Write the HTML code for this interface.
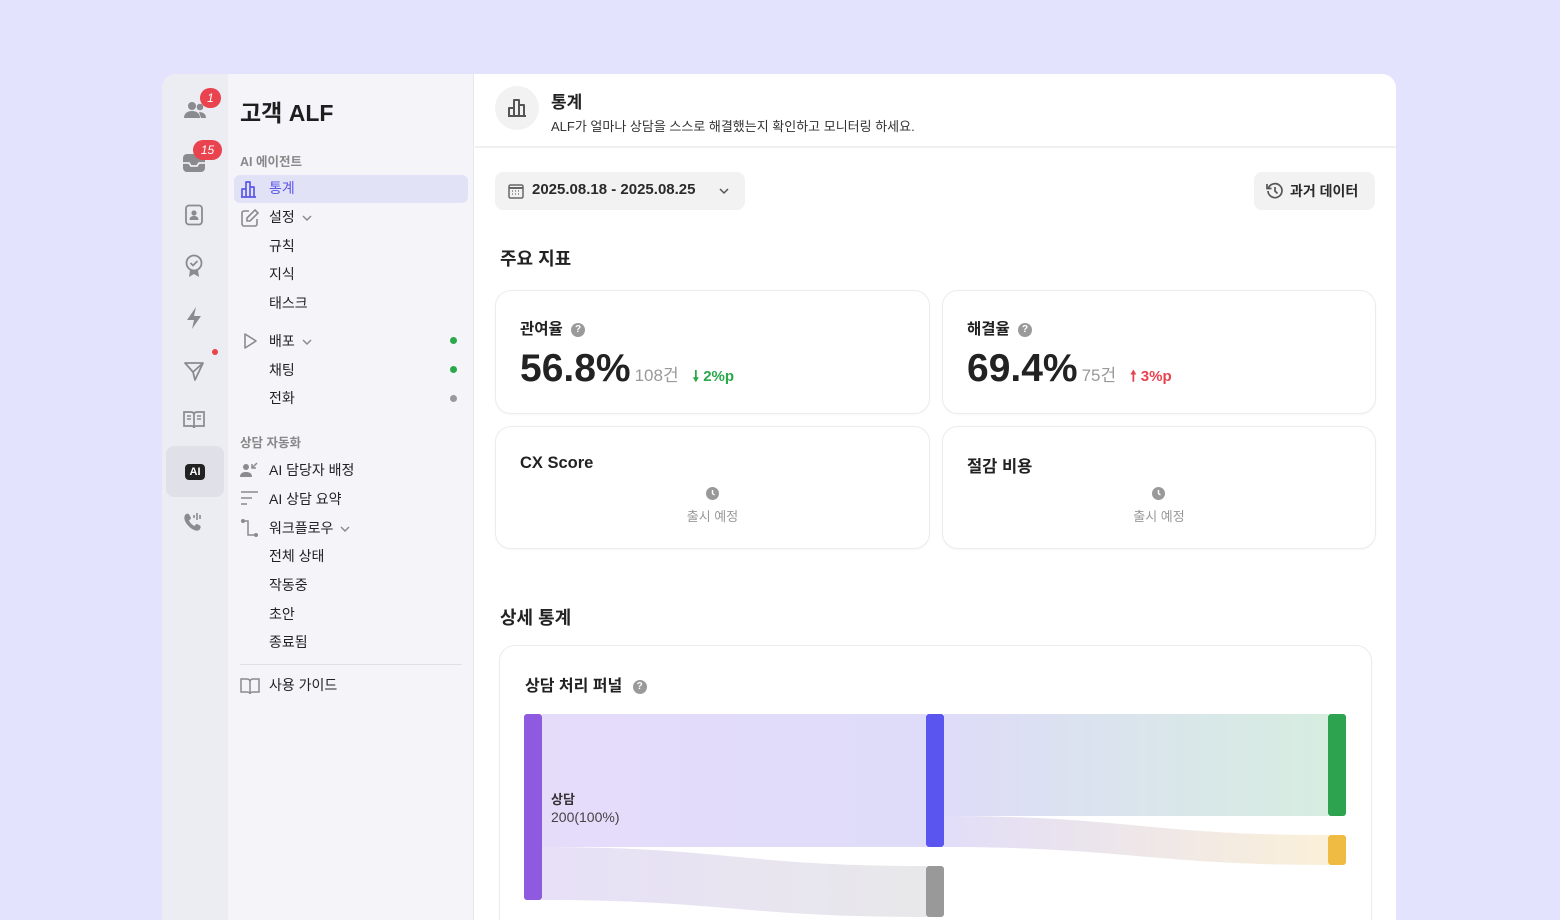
<!DOCTYPE html>
<html><head><meta charset="utf-8"><style>
*{margin:0;padding:0;box-sizing:border-box}
body{width:1560px;height:920px;overflow:hidden;background:#e4e3fd;font-family:"Liberation Sans","Noto Sans CJK KR",sans-serif;color:#222;position:relative}
.a{position:absolute}
.card{position:absolute;left:162px;top:74px;width:1234px;height:846px;border-radius:14px 14px 0 0;background:#fff;overflow:hidden}
.rail{position:absolute;left:0;top:0;width:66px;height:100%;background:#ececf3}
.side{position:absolute;left:66px;top:0;width:246px;height:100%;background:#f4f4f9;border-right:1px solid #e6e6ee}
.t{position:absolute;white-space:nowrap}
.si{position:absolute;left:41px;font-size:14px;color:#222;white-space:nowrap}
.sh{position:absolute;left:12px;font-size:12.5px;color:#888;font-weight:bold}
.dot{position:absolute;left:222px;width:7px;height:7px;border-radius:50%}
.ic{position:absolute;left:12px}
.ri{position:absolute;left:21px}
.kpi{position:absolute;border:1px solid #ececec;border-radius:16px;background:#fff;box-shadow:0 1px 2px rgba(0,0,0,.04)}
.q{display:inline-block;width:14px;height:14px;border-radius:50%;background:#9a9a9a;color:#fff;font-size:10px;font-weight:bold;text-align:center;line-height:14px;vertical-align:middle}
.badge{position:absolute;background:#e8434f;color:#fff;font-size:12px;border-radius:10px;height:20px;line-height:20px;text-align:center;font-style:italic}
.chev{display:inline-block;vertical-align:middle;margin-left:6px}
</style></head><body>
<div class="card">
 <div class="rail">
  <svg class="ri" style="top:26px" width="24" height="20" viewBox="0 0 24 20"><circle cx="9" cy="6" r="4" fill="#8a8a8f"/><circle cx="17" cy="7" r="3.3" fill="#8a8a8f"/><path d="M1 18c0-5 4-7 8-7s8 2 8 7z" fill="#8a8a8f"/><path d="M16 12c4 0 7 2 7 6h-5" fill="#8a8a8f"/></svg>
  <div class="badge" style="left:38px;top:14px;width:21px">1</div>
  <svg class="ri" style="top:80px" width="22" height="18" viewBox="0 0 22 18"><rect x="0" y="0" width="22" height="18" rx="4" fill="#8a8a8f"/><path d="M0 9h6l2 3h6l2-3h6" stroke="#ececf3" stroke-width="1.8" fill="none"/></svg>
  <div class="badge" style="left:31px;top:66px;width:29px">15</div>
  <svg class="ri" style="top:130px" width="22" height="22" viewBox="0 0 22 22"><rect x="3" y="1.5" width="16" height="19" rx="3" stroke="#8a8a8f" stroke-width="1.8" fill="none"/><circle cx="11" cy="9" r="2.6" fill="#8a8a8f"/><path d="M6.5 16c0-3 2-4 4.5-4s4.5 1 4.5 4z" fill="#8a8a8f"/></svg>
  <svg class="ri" style="top:180px" width="22" height="24" viewBox="0 0 22 24"><circle cx="11" cy="9" r="7.5" stroke="#8a8a8f" stroke-width="1.8" fill="none"/><path d="M7.5 9l2.5 2.5 4.5-4.5" stroke="#8a8a8f" stroke-width="1.8" fill="none"/><path d="M7 16l-1 7 5-3 5 3-1-7" fill="#8a8a8f"/></svg>
  <svg class="ri" style="top:232px" width="22" height="24" viewBox="0 0 22 24"><path d="M13 1L4 14h7l-2 9 9-13h-7z" fill="#8a8a8f"/></svg>
  <div class="a" style="left:50px;top:275px;width:6px;height:6px;border-radius:50%;background:#e8434f"></div>
  <svg class="ri" style="top:286px" width="22" height="22" viewBox="0 0 22 22"><path d="M2 3l18 0-8 17-2-8z M10 12l10-9" stroke="#8a8a8f" stroke-width="1.8" fill="none" stroke-linejoin="round"/></svg>
  <svg class="ri" style="top:336px" width="22" height="20" viewBox="0 0 22 20"><path d="M1 2h7c2 0 3 1 3 3v13c0-1.5-1-2-3-2H1z M21 2h-7c-2 0-3 1-3 3v13c0-1.5 1-2 3-2h7z" stroke="#8a8a8f" stroke-width="1.7" fill="none"/><path d="M4 6h4M4 9h4M14 6h4M14 9h4" stroke="#8a8a8f" stroke-width="1.4"/></svg>
  <div class="a" style="left:4px;top:372px;width:58px;height:51px;border-radius:8px;background:#e0e0e8"></div>
  <div class="a" style="left:23px;top:390px;width:20px;height:16px;border-radius:4px;background:#222;color:#fff;font-size:11px;font-weight:bold;text-align:center;line-height:16px">AI</div>
  <svg class="ri" style="top:437px" width="22" height="22" viewBox="0 0 22 22"><path d="M3 3c2-1 3 0 4 2l1 2c0 1-1 2-2 2 1 3 3 5 6 6 0-1 1-2 2-2l2 1c2 1 2 2 1 4-1 2-3 2-6 1-4-2-7-5-9-9C1 7 1 5 3 3z" fill="#8a8a8f"/><path d="M14 2v7M17 4v4M11 4v3" stroke="#8a8a8f" stroke-width="1.6"/></svg>
 </div>
 <div class="side">
  <div class="t" style="left:12px;top:20px;font-size:23px;font-weight:bold;color:#1e1e1e">고객 ALF</div>
  <div class="sh" style="top:77px">AI 에이전트</div>
  <div class="a" style="left:6px;top:101px;width:234px;height:28px;border-radius:6px;background:#e2e2f6"></div>
  <svg class="ic" style="top:105px" width="20" height="20" viewBox="0 0 20 20"><path d="M2 18V10h4v8M6 18V3h4v15M10 18V8h4v10M1 18h15" stroke="#5b57e8" stroke-width="1.7" fill="none" stroke-linejoin="round"/></svg>
  <div class="si" style="top:104px;color:#5b57e8">통계</div>
  <svg class="ic" style="top:134px" width="20" height="20" viewBox="0 0 20 20"><path d="M9 3H4a2 2 0 0 0-2 2v11a2 2 0 0 0 2 2h11a2 2 0 0 0 2-2v-5" stroke="#8a8a8f" stroke-width="1.6" fill="none"/><path d="M15 2l3 3-8 8H7v-3z" stroke="#8a8a8f" stroke-width="1.6" fill="none"/></svg>
  <div class="si" style="top:133px">설정<svg class="chev" width="12" height="8" viewBox="0 0 12 8"><path d="M2 2l4 4 4-4" stroke="#888" stroke-width="1.4" fill="none"/></svg></div>
  <div class="si" style="top:162px">규칙</div>
  <div class="si" style="top:190px">지식</div>
  <div class="si" style="top:219px">태스크</div>
  <svg class="ic" style="top:257px" width="20" height="20" viewBox="0 0 20 20"><path d="M5 3l11 7-11 7z" stroke="#8a8a8f" stroke-width="1.6" fill="none" stroke-linejoin="round"/></svg>
  <div class="si" style="top:257px">배포<svg class="chev" width="12" height="8" viewBox="0 0 12 8"><path d="M2 2l4 4 4-4" stroke="#888" stroke-width="1.4" fill="none"/></svg></div>
  <div class="dot" style="top:263px;background:#2ba84a"></div>
  <div class="si" style="top:286px">채팅</div>
  <div class="dot" style="top:292px;background:#2ba84a"></div>
  <div class="si" style="top:314px">전화</div>
  <div class="dot" style="top:321px;background:#999"></div>
  <div class="sh" style="top:358px">상담 자동화</div>
  <svg class="ic" style="top:387px" width="20" height="18" viewBox="0 0 20 18"><circle cx="6" cy="6" r="3" fill="#8a8a8f"/><path d="M0 16c0-4 3-5 6-5s6 1 6 5z" fill="#8a8a8f"/><path d="M17 2l-5 5M12 3v4h4" stroke="#8a8a8f" stroke-width="1.5" fill="none"/></svg>
  <div class="si" style="top:386px">AI 담당자 배정</div>
  <svg class="ic" style="top:416px" width="20" height="18" viewBox="0 0 20 18"><path d="M1 2h17M1 8h11M1 14h6" stroke="#8a8a8f" stroke-width="1.5"/></svg>
  <div class="si" style="top:415px">AI 상담 요약</div>
  <svg class="ic" style="top:444px" width="20" height="20" viewBox="0 0 20 20"><circle cx="3" cy="3" r="2" fill="#8a8a8f"/><circle cx="16" cy="17" r="2" fill="#8a8a8f"/><path d="M3 3h5v14h8" stroke="#8a8a8f" stroke-width="1.5" fill="none"/></svg>
  <div class="si" style="top:444px">워크플로우<svg class="chev" width="12" height="8" viewBox="0 0 12 8"><path d="M2 2l4 4 4-4" stroke="#888" stroke-width="1.4" fill="none"/></svg></div>
  <div class="si" style="top:472px">전체 상태</div>
  <div class="si" style="top:501px">작동중</div>
  <div class="si" style="top:530px">초안</div>
  <div class="si" style="top:558px">종료됨</div>
  <div class="a" style="left:12px;top:590px;width:222px;height:1px;background:#e0e0e6"></div>
  <svg class="ic" style="top:603px" width="20" height="18" viewBox="0 0 20 18"><path d="M1 2h6c2 0 3 1 3 3v12c0-1-1-2-3-2H1z M19 2h-6c-2 0-3 1-3 3v12c0-1 1-2 3-2h6z" stroke="#8a8a8f" stroke-width="1.5" fill="none"/></svg>
  <div class="si" style="top:601px">사용 가이드</div>
 </div>
 <!-- main -->
 <div class="a" style="left:313px;top:0;right:0;bottom:0">
  <div class="a" style="left:20px;top:12px;width:44px;height:44px;border-radius:50%;background:#f2f2f3"></div>
  <svg class="a" style="left:32px;top:23px" width="22" height="22" viewBox="0 0 22 22"><path d="M2 19V11h5v8M7 19V3h5v16M12 19V8h5v11M1 19h18" stroke="#555" stroke-width="2" fill="none" stroke-linejoin="round"/></svg>
  <div class="t" style="left:76px;top:14px;font-size:17px;font-weight:bold">통계</div>
  <div class="t" style="left:76px;top:42px;font-size:13px;color:#333">ALF가 얼마나 상담을 스스로 해결했는지 확인하고 모니터링 하세요.</div>
  <div class="a" style="left:0;top:72px;right:0;height:2px;background:#f0f0f2"></div>

  <div class="a" style="left:20px;top:98px;width:250px;height:38px;border-radius:8px;background:#f2f2f3"></div>
  <svg class="a" style="left:33px;top:109px" width="16" height="16" viewBox="0 0 16 16"><rect x="1" y="2" width="14" height="13" rx="1.5" stroke="#666" stroke-width="1.5" fill="none"/><path d="M1 5h14" stroke="#666" stroke-width="2"/><path d="M4 8h1M7 8h1M10 8h1M4 11h1M7 11h1M10 11h1" stroke="#666" stroke-width="1.3"/></svg>
  <div class="t" style="left:57px;top:107px;font-size:15px;font-weight:bold;color:#2a2a2a">2025.08.18 - 2025.08.25</div>
  <svg class="a" style="left:243px;top:112px" width="12" height="10" viewBox="0 0 12 10"><path d="M2 3l4 4 4-4" stroke="#555" stroke-width="1.5" fill="none"/></svg>

  <div class="a" style="left:779px;top:98px;width:121px;height:38px;border-radius:8px;background:#f2f2f3"></div>
  <svg class="a" style="left:790px;top:107px" width="20" height="20" viewBox="0 0 20 20"><path d="M3.5 7A7 7 0 1 1 3 10" stroke="#555" stroke-width="1.7" fill="none"/><path d="M2 3v4.5h4.5" stroke="#555" stroke-width="1.7" fill="none"/><path d="M10 6v4l2.5 2.5" stroke="#555" stroke-width="1.7" fill="none"/></svg>
  <div class="t" style="left:815px;top:107px;font-size:14px;font-weight:bold;color:#2a2a2a">과거 데이터</div>

  <div class="t" style="left:25px;top:171px;font-size:18px;font-weight:bold">주요 지표</div>

  <div class="kpi" style="left:20px;top:216px;width:435px;height:124px">
   <div class="t" style="left:24px;top:26px;font-size:15.5px;font-weight:bold">관여율 <span class="q" style="margin-left:4px">?</span></div>
   <div class="t" style="left:24px;top:56px;font-size:39px;font-weight:bold;color:#222">56.8%<span style="font-size:17px;font-weight:normal;color:#999;margin-left:4px">108건</span><span style="font-size:15px;color:#2ba84a;margin-left:14px;font-weight:bold">🠗 2%p</span></div>
  </div>
  <div class="kpi" style="left:467px;top:216px;width:434px;height:124px">
   <div class="t" style="left:24px;top:26px;font-size:15.5px;font-weight:bold">해결율 <span class="q" style="margin-left:4px">?</span></div>
   <div class="t" style="left:24px;top:56px;font-size:39px;font-weight:bold;color:#222">69.4%<span style="font-size:17px;font-weight:normal;color:#999;margin-left:4px">75건</span><span style="font-size:15px;color:#e8434f;margin-left:14px;font-weight:bold">🠕 3%p</span></div>
  </div>
  <div class="kpi" style="left:20px;top:352px;width:435px;height:123px">
   <div class="t" style="left:24px;top:27px;font-size:16.5px;font-weight:bold;color:#222">CX Score</div>
   <svg class="a" style="left:210px;top:60px" width="13" height="13" viewBox="0 0 13 13"><circle cx="6.5" cy="6.5" r="6.5" fill="#999"/><path d="M6.5 3v3.5l2 1.5" stroke="#fff" stroke-width="1.4" fill="none"/></svg>
   <div class="t" style="left:0;width:433px;text-align:center;top:79px;font-size:13px;color:#999">출시 예정</div>
  </div>
  <div class="kpi" style="left:467px;top:352px;width:434px;height:123px">
   <div class="t" style="left:24px;top:26px;font-size:16.5px;font-weight:bold">절감 비용</div>
   <svg class="a" style="left:209px;top:60px" width="13" height="13" viewBox="0 0 13 13"><circle cx="6.5" cy="6.5" r="6.5" fill="#999"/><path d="M6.5 3v3.5l2 1.5" stroke="#fff" stroke-width="1.4" fill="none"/></svg>
   <div class="t" style="left:0;width:432px;text-align:center;top:79px;font-size:13px;color:#999">출시 예정</div>
  </div>

  <div class="t" style="left:25px;top:530px;font-size:18px;font-weight:bold">상세 통계</div>

  <div class="kpi" style="left:24px;top:571px;width:873px;height:300px">
   <div class="t" style="left:25px;top:26px;font-size:16px;font-weight:bold">상담 처리 퍼널 <span class="q" style="margin-left:6px">?</span></div>
  </div>
  <svg class="a" style="left:0;top:0" width="921" height="846" viewBox="313 0 921 846">
   <defs>
    <linearGradient id="g1" x1="0" x2="1"><stop offset="0" stop-color="#e5dcfa"/><stop offset="1" stop-color="#dedcf9"/></linearGradient>
    <linearGradient id="g2" x1="0" x2="1"><stop offset="0" stop-color="#e7e0f7"/><stop offset="1" stop-color="#e8e8ea"/></linearGradient>
    <linearGradient id="g3" x1="0" x2="1"><stop offset="0" stop-color="#dedcf8"/><stop offset="1" stop-color="#d6ede0"/></linearGradient>
    <linearGradient id="g4" x1="0" x2="1"><stop offset="0" stop-color="#e2ddf8"/><stop offset="1" stop-color="#faf0d9"/></linearGradient>
   </defs>
   <path d="M380 640 H764 V773 H380 Z" fill="url(#g1)"/>
   <path d="M380 773 C560 773 580 792 764 792 V843 C580 843 560 826 380 826 Z" fill="url(#g2)"/>
   <path d="M782 640 H1166 V742 H782 Z" fill="url(#g3)"/>
   <path d="M782 742 C960 742 990 761 1166 761 V791 C990 791 960 773 782 773 Z" fill="url(#g4)"/>
   <rect x="362" y="640" width="18" height="186" rx="3" fill="#8e5ae0"/>
   <rect x="764" y="640" width="18" height="133" rx="3" fill="#5b55f0"/>
   <rect x="764" y="792" width="18" height="51" rx="3" fill="#999"/>
   <rect x="1166" y="640" width="18" height="102" rx="3" fill="#2da350"/>
   <rect x="1166" y="761" width="18" height="30" rx="3" fill="#efbb42"/>
  </svg>
  <div class="t" style="left:76px;top:715px;font-size:13px;font-weight:bold;color:#333">상담</div>
  <div class="t" style="left:76px;top:735px;font-size:14px;color:#444">200(100%)</div>
 </div>
</div>
</body></html>
